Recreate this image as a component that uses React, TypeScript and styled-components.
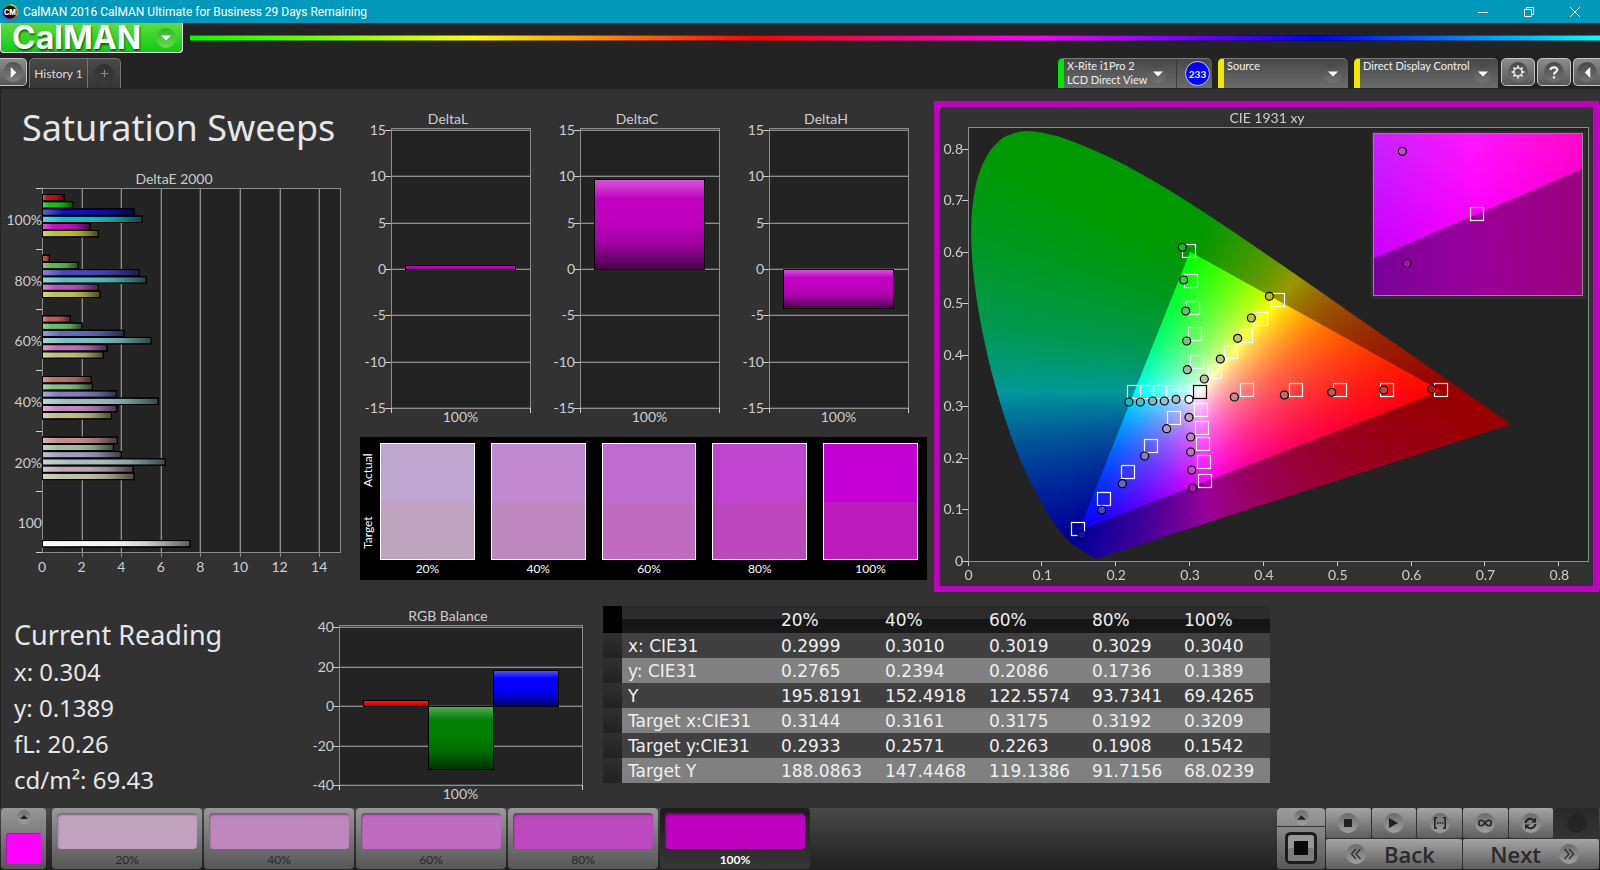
import React, { useEffect, useRef } from "react";
import styled, { createGlobalStyle } from "styled-components";

/* ---------- data ---------- */

const LEVELS = ["20%", "40%", "60%", "80%", "100%"];

const SWATCHES = [
  { level: "20%", actual: "#bfa6d0", target: "#bfa3bf" },
  { level: "40%", actual: "#c088d1", target: "#bd87bf" },
  { level: "60%", actual: "#bf6cd0", target: "#bf6bbf" },
  { level: "80%", actual: "#c145d0", target: "#bd48be" },
  { level: "100%", actual: "#c500d4", target: "#be1bbf" },
];

const TRAY = [
  { level: "20%", color: "#c0a2c0" },
  { level: "40%", color: "#bf86c0" },
  { level: "60%", color: "#bf6bc0" },
  { level: "80%", color: "#bd49be" },
  { level: "100%", color: "#c000c0" },
];

const SWEEP_COLORS: Record<string, string[]> = {
  "100%": ["#c01010", "#10c010", "#1010c0", "#10c0c0", "#c010c0", "#c0c010"],
  "80%": ["#c04444", "#4cbf4c", "#4848c0", "#58c0c0", "#c050c0", "#c0c050"],
  "60%": ["#c05858", "#66bf66", "#6666c0", "#7cbfbf", "#c070c0", "#c0c070"],
  "40%": ["#c06c6c", "#80bf80", "#8080c0", "#98c0c0", "#c088c0", "#c0c088"],
  "20%": ["#c08c8c", "#a0bfa0", "#a0a0c0", "#a8c0c0", "#c0a4c0", "#c0c0a4"],
};

const DELTA_E = [
  { level: "100%", values: [1.14, 1.6, 4.68, 5.09, 2.45, 2.87] },
  { level: "80%", values: [0.4, 1.86, 4.94, 5.29, 2.87, 2.96] },
  { level: "60%", values: [1.46, 2.05, 4.17, 5.54, 3.31, 3.12] },
  { level: "40%", values: [2.52, 2.57, 3.78, 5.89, 3.81, 3.53] },
  { level: "20%", values: [3.83, 3.63, 4.03, 6.25, 4.63, 4.68] },
];

const READINGS = ["x: 0.304", "y: 0.1389", "fL: 20.26", "cd/m²: 69.43"];

const TABLE = [
  ["x: CIE31", "0.2999", "0.3010", "0.3019", "0.3029", "0.3040"],
  ["y: CIE31", "0.2765", "0.2394", "0.2086", "0.1736", "0.1389"],
  ["Y", "195.8191", "152.4918", "122.5574", "93.7341", "69.4265"],
  ["Target x:CIE31", "0.3144", "0.3161", "0.3175", "0.3192", "0.3209"],
  ["Target y:CIE31", "0.2933", "0.2571", "0.2263", "0.1908", "0.1542"],
  ["Target Y", "188.0863", "147.4468", "119.1386", "91.7156", "68.0239"],
];

type Point = [number, number];

const LOCUS: Point[] = [
  [0.1741, 0.005], [0.1714, 0.0051], [0.1644, 0.0109], [0.1566, 0.0177], [0.144, 0.0297],
  [0.1355, 0.0399], [0.1241, 0.0578], [0.1096, 0.0868], [0.0913, 0.1327], [0.0687, 0.2007],
  [0.0454, 0.295], [0.0235, 0.4127], [0.0082, 0.5384], [0.0039, 0.6548], [0.0139, 0.7502],
  [0.0389, 0.812], [0.0743, 0.8338], [0.1142, 0.8262], [0.1547, 0.8059], [0.1929, 0.7816],
  [0.2296, 0.7543], [0.2658, 0.7243], [0.3016, 0.6923], [0.3373, 0.6589], [0.3731, 0.6245],
  [0.4087, 0.5896], [0.4441, 0.5547], [0.4788, 0.5202], [0.5125, 0.4866], [0.5752, 0.4242],
  [0.627, 0.3725], [0.6658, 0.334], [0.6915, 0.3083], [0.719, 0.2809], [0.7347, 0.2653],
];

const TARGETS: Point[] = [
  [0.2986, 0.6014], [0.3008, 0.5432], [0.3035, 0.4901], [0.3067, 0.4397], [0.3094, 0.3854],
  [0.4191, 0.5063], [0.3961, 0.4688], [0.3762, 0.4371], [0.3554, 0.4048], [0.3338, 0.3666],
  [0.64, 0.3317], [0.5667, 0.3317], [0.503, 0.3317], [0.4435, 0.3317], [0.3768, 0.3317],
  [0.3209, 0.1552], [0.3192, 0.1926], [0.3175, 0.2276], [0.3167, 0.2571], [0.3151, 0.2938],
  [0.1483, 0.0621], [0.1835, 0.1203], [0.216, 0.172], [0.2471, 0.2224], [0.2787, 0.2768],
  [0.2241, 0.3285], [0.2422, 0.3285], [0.2598, 0.3285], [0.2774, 0.3285], [0.2945, 0.3285],
];

/* Each sweep runs from full saturation down to 20%. */
const MEASURED: Record<string, Point[]> = {
  red: [[0.6272, 0.3337], [0.5622, 0.3317], [0.4918, 0.3272], [0.4277, 0.322], [0.36, 0.3181]],
  green: [[0.2895, 0.6085], [0.2913, 0.5451], [0.2941, 0.485], [0.2954, 0.4268], [0.2963, 0.3712]],
  blue: [[0.1537, 0.0504], [0.1803, 0.0989], [0.2083, 0.15], [0.2385, 0.2037], [0.2683, 0.2567]],
  cyan: [[0.2173, 0.3084], [0.2327, 0.3084], [0.2494, 0.3104], [0.2652, 0.3104], [0.281, 0.3136]],
  magenta: [[0.3035, 0.1416], [0.3022, 0.1765], [0.3008, 0.2114], [0.3008, 0.2405], [0.2986, 0.2787]],
  yellow: [[0.4074, 0.5134], [0.383, 0.4714], [0.3645, 0.4319], [0.341, 0.3918], [0.3193, 0.3531]],
};
const SWEEP_ORDER = ["red", "green", "blue", "cyan", "magenta", "yellow"];
const SATURATIONS = ["100%", "80%", "60%", "40%", "20%"];

/* ---------- page shell ---------- */

const GlobalStyle = createGlobalStyle`
  *, *::before, *::after { box-sizing: border-box; }
  body {
    margin: 0;
    background: #232323;
    color: #e6e6e6;
    font-family: Lato, "Liberation Sans", sans-serif;
    font-size: 14px;
  }
  button { font: inherit; color: inherit; padding: 0; border: 0; background: none; cursor: pointer; }
  h1, h2, p { margin: 0; font-weight: 400; }
  svg, canvas { display: block; }
`;

const Page = styled.div`
  min-height: 100vh;
  min-width: 1200px;
  display: flex;
  flex-direction: column;
`;

const TitleBar = styled.header`
  display: flex;
  align-items: center;
  height: 23px;
  padding: 0 2px;
  background: #0099bc;
  color: #fff;
  font-family: Roboto, "Open Sans", sans-serif;
  font-size: 12px;
`;

const TitleText = styled.span`
  flex: 1;
  margin-left: 5px;
`;

const WindowButton = styled.button`
  width: 46px;
  height: 20px;
  display: grid;
  place-items: center;
`;

const LogoRow = styled.div`
  display: flex;
  align-items: flex-start;
  gap: 7px;
  height: 35px;
`;

const LogoButton = styled.button`
  display: flex;
  align-items: center;
  justify-content: space-between;
  width: 183px;
  height: 30px;
  padding: 0 6px 0 11px;
  border: 1px solid #f0f0f0;
  border-top: 0;
  border-radius: 0 0 4px 4px;
  background: linear-gradient(#62dc3c, #0ccc14);
  font-family: Inter, "DejaVu Sans", sans-serif;
  font-size: 32px;
  line-height: 28px;
  font-weight: 700;
  color: #fff;
  text-shadow: 1px 2px 2px rgba(0, 60, 0, 0.7);
`;

const Rainbow = styled.div`
  flex: 1;
  height: 6px;
  margin-top: 12px;
  background: linear-gradient(90deg, #0f0, #ff0, #f00, #f0f, #00f, #0ff);
  border: solid rgba(0, 0, 0, 0.45);
  border-width: 1px 0;
`;

const Knob = styled.span<{ $size: number; $tone?: string }>`
  display: grid;
  place-items: center;
  flex: none;
  width: ${(p) => p.$size}px;
  height: ${(p) => p.$size}px;
  border-radius: 50%;
  background: ${(p) => p.$tone ?? "linear-gradient(#484848, #747474)"};
`;

const TabRow = styled.nav`
  display: flex;
  align-items: flex-start;
  height: 30px;
`;

const SquareButton = styled.button<{ $edge?: "left" | "right" }>`
  display: grid;
  place-items: center;
  width: ${(p) => (p.$edge ? 27 : 34)}px;
  height: 28px;
  border: 1px solid #c4c4c4;
  border-radius: 5px;
  background: linear-gradient(#8c8c8c, #585858);
  ${(p) => p.$edge === "left" && "border-left: 0; border-top-left-radius: 0; border-bottom-left-radius: 0;"}
  ${(p) => p.$edge === "right" && "border-right: 0; border-top-right-radius: 0; border-bottom-right-radius: 0;"}
`;

const TabGroup = styled.div`
  display: flex;
  flex: none;
  height: 30px;
  margin-left: 2px;
  border: 1px solid #747474;
  border-bottom: 0;
  border-radius: 5px 5px 0 0;
  background: linear-gradient(#4a4a4a, #343434);
`;

const Tab = styled.button`
  width: 58px;
  white-space: nowrap;
  font-size: 12px;
  color: #dcdcdc;
  border-right: 1px solid #747474;
`;

const AddTab = styled.button`
  display: grid;
  place-items: center;
  width: 32px;
`;

const DeviceBar = styled.div`
  display: flex;
  gap: 6px;
  margin-left: auto;
`;

const Device = styled.div<{ $accent: string; $width: number }>`
  display: flex;
  width: ${(p) => p.$width}px;
  height: 30px;
  border-top: 1px solid #7a7a7a;
  border-left: 6px solid ${(p) => p.$accent};
  border-radius: 5px 5px 0 0;
  background: linear-gradient(#484848, #6c6c6c);
`;

const DeviceButton = styled.button`
  flex: 1;
  display: flex;
  align-items: center;
  justify-content: space-between;
  padding: 0 6px 0 3px;
  text-align: left;
  white-space: nowrap;
  font-size: 11px;
  line-height: 14px;
  color: #f0f0f0;
`;

const DeviceName = styled.span`
  align-self: flex-start;
`;

const Counter = styled.span`
  display: flex;
  align-items: center;
  justify-content: flex-end;
  width: 36px;
  margin-left: 3px;
  padding-right: 2px;
  border-left: 1px solid #3c3c3c;
`;

const CounterDisc = styled.span`
  display: grid;
  place-items: center;
  width: 25px;
  height: 25px;
  border: 1px solid #c8c8ff;
  border-radius: 50%;
  background: #0000ff;
  color: #fff;
  font-size: 10px;
  font-weight: 700;
`;

const ToolButtons = styled.div`
  display: flex;
  gap: 2px;
  margin-left: 3px;
`;

const Main = styled.main`
  flex: 1;
  margin-top: 1px;
  border-left: 1px solid #232323;
  background: #323232;
`;

const TopArea = styled.section`
  display: grid;
  grid-template-columns: 357fr 569fr 673fr;
  align-items: start;
`;

const SweepColumn = styled.div`
  padding-top: 17px;
`;

const PageTitle = styled.h1`
  padding-left: 21px;
  margin-bottom: 15px;
  font-family: "Noto Sans", "Open Sans", sans-serif;
  font-size: 36px;
  line-height: 44px;
  white-space: nowrap;
`;

const DeltaColumn = styled.div`
  padding-top: 20px;
`;

const DeltaRow = styled.div`
  display: grid;
  grid-template-columns: repeat(3, 1fr);
  padding-right: 2px;
`;

const ChartSvg = styled.svg`
  width: 100%;
  height: auto;
  font-family: Lato, "Liberation Sans", sans-serif;
  font-size: 14px;
  fill: #cdcdcd;
`;

const ComparePanel = styled.div`
  display: flex;
  gap: 4px;
  height: 143px;
  margin: 8px 0 0 2px;
  padding: 6px 9px 0 0;
  background: #000;
  color: #fff;
  font-size: 12px;
`;

const SideLabels = styled.div`
  display: grid;
  grid-template-rows: 54px 72px;
  width: 16px;
`;

const SideLabel = styled.span`
  writing-mode: vertical-rl;
  transform: rotate(180deg);
  text-align: center;
  line-height: 16px;
`;

const CompareList = styled.div`
  flex: 1;
  display: grid;
  grid-template-columns: repeat(5, 1fr);
  gap: 16px;
`;

const CompareSwatch = styled.div`
  display: grid;
  height: 117px;
  grid-template-rows: 1fr 1fr;
  border: 1px solid #fff;
`;

const SwatchHalf = styled.span<{ $color: string }>`
  background: ${(p) => p.$color};
`;

const CompareLabel = styled.div`
  text-align: center;
  line-height: 18px;
`;

const CieColumn = styled.div`
  padding: 12px 1px 0 7px;
`;

const CiePanel = styled.div`
  display: grid;
  border: 6px solid #c000c0;
`;

const CieCanvas = styled.canvas`
  grid-area: 1 / 1;
  width: 100%;
  height: auto;
`;

const CieSvg = styled(ChartSvg)`
  grid-area: 1 / 1;
`;

const BottomArea = styled.section`
  display: grid;
  grid-template-columns: 299fr 303fr 667fr 330fr;
  align-items: start;
  padding-top: 14px;
`;

const ReadingBlock = styled.div`
  padding: 10px 0 0 13px;
  font-family: "Noto Sans", "Open Sans", sans-serif;
`;

const ReadingTitle = styled.h2`
  font-size: 27px;
  line-height: 38px;
`;

const ReadingLine = styled.p`
  font-size: 24px;
  line-height: 36px;
`;

const DataTable = styled.table`
  width: 100%;
  table-layout: fixed;
  border-collapse: collapse;
  font-family: "DejaVu Sans", Verdana, sans-serif;
  font-size: 17px;
  line-height: 24px;
  color: #efefef;
  text-align: left;
  white-space: nowrap;

  th, td { padding: 1px 0 0 6px; font-weight: 400; }
`;

const HeadRow = styled.tr`
  height: 27px;
  background: linear-gradient(#2c2c2c 0 48%, #141414 48%, #181818);
`;

const BodyRow = styled.tr<{ $light: boolean }>`
  height: 25px;
  background: ${(p) => (p.$light ? "#808080" : "#404040")};
`;

const RowHandle = styled.td<{ $head?: boolean }>`
  background: ${(p) => (p.$head ? "#000" : "linear-gradient(#303030, #222)")};
`;

const Tray = styled.footer`
  display: flex;
  align-items: flex-start;
  height: 62px;
  padding: 0 1px;
  background: linear-gradient(#484848, #202020);
  font-size: 12px;
`;

const CurrentPatch = styled.button`
  display: flex;
  flex-direction: column;
  align-items: center;
  justify-content: space-between;
  width: 45px;
  height: 61px;
  margin-right: 6px;
  padding: 2px 5px 5px;
  border-radius: 4px;
  background: linear-gradient(#989898, #565656);
`;

const CurrentColor = styled.span`
  width: 35px;
  height: 31px;
  border-radius: 3px;
  border: 1px solid #c400c4;
  border-width: 1px 0 0 1px;
  background: #ff00ff;
`;

const PatchList = styled.div`
  display: flex;
  gap: 2px;
`;

const PatchButton = styled.button<{ $active: boolean }>`
  display: flex;
  flex-direction: column;
  gap: 3px;
  width: 150px;
  height: 61px;
  padding: 5px 5px 0;
  border-radius: 4px;
  background: ${(p) => (p.$active ? "linear-gradient(#1c1c1c, #363636)" : "linear-gradient(#989898, #565656)")};
  color: ${(p) => (p.$active ? "#fff" : "#282828")};
  font-weight: ${(p) => (p.$active ? 700 : 400)};
`;

const PatchColor = styled.span<{ $color: string }>`
  height: 36px;
  border-radius: 4px;
  background: ${(p) => p.$color};
  box-shadow: inset 1px 2px 2px rgba(0, 0, 0, 0.35);
`;

const PatchLabel = styled.span`
  text-align: center;
  line-height: 16px;
`;

const Transport = styled.div`
  display: grid;
  grid-template-columns: 48px 273px;
  gap: 1px;
  margin-left: auto;
  color: #2a2a2a;
`;

const SourceStack = styled.div`
  display: grid;
  grid-template-rows: 18px 42px;
  gap: 1px;
  background: #333;
`;

const StackButton = styled.button<{ $top?: boolean }>`
  display: grid;
  place-items: center;
  border-radius: ${(p) => (p.$top ? "4px 4px 0 0" : "0 0 4px 4px")};
  background: ${(p) => (p.$top ? "linear-gradient(#9c9c9c, #8a8a8a)" : "linear-gradient(#888, #585858)")};
`;

const TransportPad = styled.div`
  display: grid;
  grid-template-columns: repeat(6, 1fr);
  grid-template-rows: 30px 30px;
  gap: 1px;
  background: #333;
`;

const PadButton = styled.button<{ $off?: boolean }>`
  display: grid;
  place-items: center;
  border-radius: 2px;
  background: ${(p) => (p.$off ? "linear-gradient(#2a2a2a, #343434)" : "linear-gradient(#a4a4a4, #5e5e5e)")};
`;

const StepButton = styled.button<{ $align: "flex-start" | "flex-end" }>`
  grid-column: span 3;
  display: flex;
  align-items: center;
  justify-content: ${(p) => p.$align};
  gap: 18px;
  padding: 0 20px;
  border-radius: 2px;
  background: linear-gradient(#a4a4a4, #5e5e5e);
  font-family: "Open Sans", "Noto Sans", sans-serif;
  font-size: 22px;
  font-weight: 600;
  line-height: 30px;
`;

/* ---------- small drawings ---------- */

const padTone = "linear-gradient(#6c6c6c, #a0a0a0)";

const Triangle = ({ dir, size = 10, color = "#fff" }: { dir: "down" | "up" | "right" | "left"; size?: number; color?: string }) => {
  const d = {
    down: "M0 2.5H10L5 7.5Z",
    up: "M0 7.5H10L5 2.5Z",
    right: "M2.5 0V10L7.5 5Z",
    left: "M7.5 0V10L2.5 5Z",
  }[dir];
  return (
    <svg width={size} height={size} viewBox="0 0 10 10" aria-hidden="true">
      <path d={d} fill={color} />
    </svg>
  );
};

const AppIcon = () => (
  <svg width="16" height="16" viewBox="0 0 16 16" aria-hidden="true">
    <path d="M8 8L8 0A8 8 0 0 1 15 4Z" fill="#b3e000" />
    <path d="M8 8L15 4A8 8 0 0 1 15 12Z" fill="#e8a000" />
    <path d="M8 8L15 12A8 8 0 0 1 8 16Z" fill="#e0402a" />
    <path d="M8 8L8 16A8 8 0 0 1 1 12Z" fill="#9a28e0" />
    <path d="M8 8L1 12A8 8 0 0 1 1 4Z" fill="#2050f0" />
    <path d="M8 8L1 4A8 8 0 0 1 8 0Z" fill="#10c040" />
    <circle cx="8" cy="8" r="6.6" fill="#0a0a0a" />
    <text x="8" y="10.6" textAnchor="middle" fontFamily="Inter, sans-serif" fontWeight="800" fontSize="7" fill="#fff">CM</text>
  </svg>
);

const Gear = () => (
  <svg width="14" height="14" viewBox="0 0 14 14" fill="none" stroke="#dedede" aria-hidden="true">
    <circle cx="7" cy="7" r="4" strokeWidth="1.6" />
    {[0, 45, 90, 135, 180, 225, 270, 315].map((a) => (
      <path key={a} d="M7 3V0.6" strokeWidth="2" transform={`rotate(${a} 7 7)`} />
    ))}
  </svg>
);

const Chevrons = ({ flip }: { flip?: boolean }) => (
  <svg width="12" height="12" viewBox="0 0 12 12" fill="none" stroke="#303030" strokeWidth="1.4" aria-hidden="true">
    <path d={flip ? "M1.5 1L6 6L1.5 11M6 1L10.5 6L6 11" : "M6 1L1.5 6L6 11M10.5 1L6 6L10.5 11"} />
  </svg>
);

/* ---------- charts ---------- */

const FRAME = "#8c8c8c";
const PLOT_BG = "#232323";

/* Light-to-dark sheen laid over every bar. */
const Gloss = ({ id, horizontal }: { id: string; horizontal?: boolean }) => (
  <linearGradient id={id} x1="0" y1="0" x2={horizontal ? 1 : 0} y2={horizontal ? 0 : 1}>
    <stop offset="0" stopColor="#fff" stopOpacity="0.34" />
    <stop offset="0.22" stopColor="#fff" stopOpacity="0" />
    <stop offset="0.5" stopColor="#000" stopOpacity="0.02" />
    <stop offset="0.7" stopColor="#000" stopOpacity="0.15" />
    <stop offset="1" stopColor="#000" stopOpacity="0.62" />
  </linearGradient>
);

const DeltaEChart = () => {
  const left = 41, top = 23, width = 298, height = 364;
  const unit = 19.8;
  const group = height / 6;
  const pitch = 7.2;
  return (
    <ChartSvg viewBox="0 0 357 415" role="img" aria-label="DeltaE 2000">
      <defs><Gloss id="gloss-e" horizontal /></defs>
      <text x="173" y="19" textAnchor="middle">DeltaE 2000</text>
      <rect x={left} y={top} width={width} height={height} fill={PLOT_BG} />
      {[2, 4, 6, 8, 10, 12, 14].map((v) => (
        <g key={v}>
          <rect x={Math.round(left + v * unit) - 1} y={top} width="1" height={height} fill="#484848" />
          <rect x={Math.round(left + v * unit)} y={top} width="1" height={height + 5} fill={FRAME} />
        </g>
      ))}
      {[0, 2, 4, 6, 8, 10, 12, 14].map((v) => (
        <text key={v} x={left + v * unit} y={407} textAnchor="middle">{v}</text>
      ))}
      {[0, 1, 2, 3, 4, 5, 6].map((i) => (
        <rect key={i} x={left - 6} y={Math.round(top + i * group)} width="6" height="1" fill="#cdcdcd" />
      ))}
      <rect x={left + 0.5} y={top + 0.5} width={width} height={height} fill="none" stroke={FRAME} />
      {DELTA_E.map((g, gi) =>
        g.values.map((v, i) => {
          const y = top + gi * group + 6.5 + i * pitch;
          return (
            <g key={g.level + i} stroke="#000">
              <rect x={left + 0.5} y={y} width={v * unit - 1} height="6.4" fill={SWEEP_COLORS[g.level][i]} />
              <rect x={left + 0.5} y={y} width={v * unit - 1} height="6.4" fill="url(#gloss-e)" />
            </g>
          );
        })
      )}
      <g stroke="#000">
        <rect x={left + 0.5} y={top + 5 * group + 6 + 6 * pitch} width={7.5 * unit - 1} height="6.4" fill="#f6f6f6" />
        <rect x={left + 0.5} y={top + 5 * group + 6 + 6 * pitch} width={7.5 * unit - 1} height="6.4" fill="url(#gloss-e)" />
      </g>
      {[...DELTA_E.map((g) => g.level), "100"].map((label, i) => (
        <text key={label} x="41" y={top + i * group + 37} textAnchor="end">{label}</text>
      ))}
    </ChartSvg>
  );
};

type VBar = { from: number; to: number; value: number; color: string };

const VerticalChart = (p: {
  id: string; title: string; titleX: number; viewBox: string; left: number; top: number; width: number;
  max: number; step: number; unit: number; pad: number; bars: VBar[];
}) => {
  const ticks: number[] = [];
  for (let v = p.max; v >= -p.max; v -= p.step) ticks.push(v);
  const yOf = (v: number) => Math.round(p.top + p.pad + (p.max - v) * p.unit);
  const bottom = yOf(-p.max);
  return (
    <ChartSvg viewBox={p.viewBox} role="img" aria-label={p.title}>
      <defs><Gloss id={p.id} /></defs>
      <text x={p.titleX} y={p.top - 4} textAnchor="middle">{p.title}</text>
      <rect x={p.left} y={p.top} width={p.width} height={bottom - p.top} fill={PLOT_BG} />
      {ticks.map((v) => (
        <g key={v}>
          <rect x={p.left} y={yOf(v) - 1} width={p.width} height="1" fill="#484848" />
          <rect x={p.left} y={yOf(v)} width={p.width} height="1" fill={FRAME} />
          <rect x={p.left - 6} y={yOf(v)} width="6" height="1" fill="#cdcdcd" />
          <text x={p.left - 5} y={yOf(v) + 5} textAnchor="end">{v}</text>
        </g>
      ))}
      <rect x={p.left + 0.5} y={p.top + 0.5} width={p.width} height={bottom - p.top} fill="none" stroke={FRAME} />
      <rect x={p.left} y={bottom} width="1" height="5" fill="#cdcdcd" />
      <rect x={p.left + p.width} y={bottom} width="1" height="5" fill="#cdcdcd" />
      {p.bars.map((b) => {
        const y = Math.min(yOf(0), yOf(b.value)) + 0.5;
        const h = Math.abs(yOf(b.value) - yOf(0));
        return (
          <g key={b.from} stroke="#000">
            <rect x={b.from + 0.5} y={y} width={b.to - b.from} height={h} fill={b.color} />
            <rect x={b.from + 0.5} y={y} width={b.to - b.from} height={h} fill={`url(#${p.id})`} />
          </g>
        );
      })}
      <text x={p.left + p.width / 2} y={bottom + 14} textAnchor="middle">100%</text>
    </ChartSvg>
  );
};

const DeltaChart = ({ title, value }: { title: string; value: number }) => (
  <VerticalChart
    id={`gloss-${title}`} title={title} titleX={90} viewBox="0 0 189 320"
    left={33} top={19} width={139} max={15} step={5} unit={9.27} pad={2}
    bars={[{ from: 47, to: 157, value, color: "#c000c0" }]}
  />
);

/* CIE diagram geometry, in the units of its 653x479 drawing. */
const CIE_W = 653, CIE_H = 479;
const PLOT = { x: 28, y: 20, w: 621, h: 434 };
const px = (x: number) => 28.5 + x * 738.5;
const py = (y: number) => 454 - y * 515.5;
const INSET = { x: 433, y: 26, w: 210, h: 163 };
const ix = (x: number) => 537 + (x - 0.3209) * 4150;
const iy = (y: number) => 107 - (y - 0.1542) * 3230;

/* Linear Rec.709 colour of a chromaticity; out-of-gamut colours are clipped and dimmed. */
function chromaColor(x: number, y: number): [number, number, number] {
  const z = 1 - x - y;
  let r = 3.2405 * x - 1.5371 * y - 0.4985 * z;
  let g = -0.9693 * x + 1.876 * y + 0.0416 * z;
  let b = 0.0556 * x - 0.204 * y + 1.0572 * z;
  const outside = r < 0 || g < 0 || b < 0;
  r = Math.max(0, r);
  g = Math.max(0, g);
  b = Math.max(0, b);
  const k = (outside ? 153 : 255) / Math.max(r, g, b);
  return [r * k, g * k, b * k];
}

function chromaTile(w: number, h: number, toX: (u: number) => number, toY: (v: number) => number) {
  const scale = 2;
  const tile = document.createElement("canvas");
  tile.width = w * scale;
  tile.height = h * scale;
  const c = tile.getContext("2d")!;
  const img = c.createImageData(tile.width, tile.height);
  for (let j = 0; j < tile.height; j++) {
    for (let i = 0; i < tile.width; i++) {
      const [r, g, b] = chromaColor(toX((i + 0.5) / scale), toY((j + 0.5) / scale));
      const o = (j * tile.width + i) * 4;
      img.data[o] = r;
      img.data[o + 1] = g;
      img.data[o + 2] = b;
      img.data[o + 3] = 255;
    }
  }
  c.putImageData(img, 0, 0);
  return tile;
}

function drawDiagram(canvas: HTMLCanvasElement) {
  const c = canvas.getContext("2d")!;
  c.clearRect(0, 0, CIE_W, CIE_H);
  c.fillStyle = PLOT_BG;
  c.fillRect(PLOT.x, PLOT.y, PLOT.w, PLOT.h);

  const tile = chromaTile(PLOT.w, PLOT.h, (u) => (u + PLOT.x - 28.5) / 738.5, (v) => (454 - v - PLOT.y) / 515.5);
  c.save();
  c.beginPath();
  const pts = LOCUS.map(([x, y]) => [px(x), py(y)]);
  c.moveTo(pts[0][0], pts[0][1]);
  for (let i = 0; i < pts.length - 1; i++) {
    const a = pts[Math.max(0, i - 1)], b = pts[i], d = pts[i + 1], e = pts[Math.min(pts.length - 1, i + 2)];
    c.bezierCurveTo(
      b[0] + (d[0] - a[0]) / 6, b[1] + (d[1] - a[1]) / 6,
      d[0] - (e[0] - b[0]) / 6, d[1] - (e[1] - b[1]) / 6,
      d[0], d[1]
    );
  }
  c.closePath();
  c.clip();
  c.drawImage(tile, PLOT.x, PLOT.y, PLOT.w, PLOT.h);
  c.restore();

  c.fillStyle = "#2e2e2e";
  c.fillRect(INSET.x - 2, INSET.y - 2, INSET.w + 5, INSET.h + 5);
  const inset = chromaTile(
    INSET.w, INSET.h,
    (u) => 0.3209 + (u + INSET.x - 537) / 4150,
    (v) => 0.1542 - (v + INSET.y - 107) / 3230
  );
  c.drawImage(inset, INSET.x, INSET.y, INSET.w, INSET.h);
}

const Target = ({ x, y, color = "#fff" }: { x: number; y: number; color?: string }) => (
  <rect x={Math.round(x) - 6.5} y={Math.round(y) - 6.5} width="13" height="13" fill="none" stroke={color} strokeWidth="1.2" />
);

const Dot = ({ x, y, color }: { x: number; y: number; color: string }) => (
  <circle cx={x} cy={y} r="4" fill={color} stroke="#000" strokeWidth="1.2" />
);

const CieChart = () => {
  const ref = useRef<HTMLCanvasElement>(null);
  useEffect(() => {
    if (ref.current) drawDiagram(ref.current);
  }, []);
  return (
    <CiePanel>
      <CieCanvas ref={ref} width={CIE_W} height={CIE_H} />
      <CieSvg viewBox={`0 0 ${CIE_W} ${CIE_H}`} role="img" aria-label="CIE 1931 xy">
        <text x="327" y="16" textAnchor="middle">CIE 1931 xy</text>
        <rect x={PLOT.x + 0.5} y={PLOT.y + 0.5} width={PLOT.w - 1} height={PLOT.h} fill="none" stroke={FRAME} />
        {[0, 1, 2, 3, 4, 5, 6, 7, 8].map((n) => (
          <g key={n}>
            <rect x={Math.round(px(n / 10)) - 1} y="455" width="1" height="4" fill="#cdcdcd" />
            <text x={px(n / 10)} y="473" textAnchor="middle">{n / 10}</text>
            <rect x="22" y={Math.round(py(n / 10))} width="6" height="1" fill="#cdcdcd" />
            <text x="23" y={py(n / 10) + 5} textAnchor="end">{n / 10}</text>
          </g>
        ))}
        {TARGETS.map(([x, y]) => <Target key={`${x}-${y}`} x={px(x)} y={py(y)} />)}
        <Target x={px(0.313)} y={py(0.3285)} color="#000" />
        {SWEEP_ORDER.map((name, s) =>
          MEASURED[name].map(([x, y], i) => (
            <Dot key={name + i} x={px(x)} y={py(y)} color={SWEEP_COLORS[SATURATIONS[i]][s]} />
          ))
        )}
        <Dot x={px(0.2986)} y={py(0.3136)} color="#fff" />
        <rect x={INSET.x + 0.5} y={INSET.y + 0.5} width={INSET.w - 1} height={INSET.h - 1} fill="none" stroke={FRAME} />
        <Target x={ix(0.3209)} y={iy(0.1542)} />
        <Dot x={ix(0.304)} y={iy(0.1389)} color="#c000c0" />
        <Dot x={ix(0.3029)} y={iy(0.1736)} color="#c050c0" />
      </CieSvg>
    </CiePanel>
  );
};

/* ---------- page ---------- */

export default function App() {
  return (
    <Page>
      <GlobalStyle />
      <TitleBar>
        <AppIcon />
        <TitleText>CalMAN 2016 CalMAN Ultimate for Business 29 Days Remaining</TitleText>
        <WindowButton aria-label="Minimize">
          <svg width="10" height="10" viewBox="0 0 10 10"><path d="M0 5.5H10" stroke="#fff" /></svg>
        </WindowButton>
        <WindowButton aria-label="Restore">
          <svg width="10" height="10" viewBox="0 0 10 10" fill="none" stroke="#fff">
            <path d="M0.5 2.5H7.5V9.5H0.5ZM2.5 2.5V0.5H9.5V7.5H7.5" />
          </svg>
        </WindowButton>
        <WindowButton aria-label="Close">
          <svg width="10" height="10" viewBox="0 0 10 10"><path d="M0 0L10 10M10 0L0 10" stroke="#fff" /></svg>
        </WindowButton>
      </TitleBar>

      <LogoRow>
        <LogoButton aria-haspopup="menu">
          CalMAN
          <Knob $size={20} $tone="linear-gradient(#2cb428, #6cdc4c)"><Triangle dir="down" /></Knob>
        </LogoButton>
        <Rainbow />
      </LogoRow>

      <TabRow>
        <SquareButton $edge="left" aria-label="Show panel">
          <Knob $size={20} $tone="linear-gradient(#505050, #808080)"><Triangle dir="right" size={11} /></Knob>
        </SquareButton>
        <TabGroup>
          <Tab>History 1</Tab>
          <AddTab aria-label="Add tab">
            <Knob $size={20} $tone="linear-gradient(#303030, #3c3c3c)">
              <svg width="7" height="7" viewBox="0 0 7 7"><path d="M0 3.5H7M3.5 0V7" stroke="#8c8c8c" /></svg>
            </Knob>
          </AddTab>
        </TabGroup>
        <DeviceBar>
          <Device $accent="#00e800" $width={154}>
            <DeviceButton aria-haspopup="menu">
              <DeviceName>X-Rite i1Pro 2<br />LCD Direct View</DeviceName>
              <Knob $size={19}><Triangle dir="down" /></Knob>
            </DeviceButton>
            <Counter><CounterDisc>233</CounterDisc></Counter>
          </Device>
          <Device $accent="#ece800" $width={130}>
            <DeviceButton aria-haspopup="menu">
              <DeviceName>Source</DeviceName>
              <Knob $size={19}><Triangle dir="down" /></Knob>
            </DeviceButton>
          </Device>
          <Device $accent="#ece800" $width={144}>
            <DeviceButton aria-haspopup="menu">
              <DeviceName>Direct Display Control</DeviceName>
              <Knob $size={19}><Triangle dir="down" /></Knob>
            </DeviceButton>
          </Device>
        </DeviceBar>
        <ToolButtons>
          <SquareButton aria-label="Settings"><Knob $size={20}><Gear /></Knob></SquareButton>
          <SquareButton aria-label="Help">
            <Knob $size={20}>
              <svg width="10" height="13" viewBox="0 0 10 13" fill="none" stroke="#f4f4f4" strokeWidth="2.2">
                <path d="M1.5 4C1.5 0.6 8.5 0.4 8.3 3.8C8.2 6 5 5.8 5 8.6M5 10.2V12.6" />
              </svg>
            </Knob>
          </SquareButton>
          <SquareButton $edge="right" aria-label="Hide panel"><Knob $size={20}><Triangle dir="left" size={11} /></Knob></SquareButton>
        </ToolButtons>
      </TabRow>

      <Main>
        <TopArea>
          <SweepColumn>
            <PageTitle>Saturation Sweeps</PageTitle>
            <DeltaEChart />
          </SweepColumn>
          <DeltaColumn>
            <DeltaRow>
              <DeltaChart title="DeltaL" value={0.45} />
              <DeltaChart title="DeltaC" value={9.75} />
              <DeltaChart title="DeltaH" value={-4.15} />
            </DeltaRow>
            <ComparePanel>
              <SideLabels>
                <SideLabel>Actual</SideLabel>
                <SideLabel>Target</SideLabel>
              </SideLabels>
              <CompareList>
                {SWATCHES.map((s) => (
                  <div key={s.level}>
                    <CompareSwatch>
                      <SwatchHalf $color={s.actual} />
                      <SwatchHalf $color={s.target} />
                    </CompareSwatch>
                    <CompareLabel>{s.level}</CompareLabel>
                  </div>
                ))}
              </CompareList>
            </ComparePanel>
          </DeltaColumn>
          <CieColumn><CieChart /></CieColumn>
        </TopArea>

        <BottomArea>
          <ReadingBlock>
            <ReadingTitle>Current Reading</ReadingTitle>
            {READINGS.map((r) => <ReadingLine key={r}>{r}</ReadingLine>)}
          </ReadingBlock>
          <VerticalChart
            id="gloss-rgb" title="RGB Balance" titleX={148} viewBox="0 0 303 200"
            left={39} top={19} width={243} max={40} step={20} unit={1.975} pad={2}
            bars={[
              { from: 63, to: 128, value: 3, color: "#ff0000" },
              { from: 128, to: 193, value: -31.8, color: "#008000" },
              { from: 193, to: 258, value: 18.2, color: "#0000ff" },
            ]}
          />
          <DataTable>
            <colgroup>
              {[19, 153, 104, 104, 103, 92, 92].map((w, i) => <col key={i} width={`${(w / 667) * 100}%`} />)}
            </colgroup>
            <thead>
              <HeadRow>
                <RowHandle $head />
                <td />
                {LEVELS.map((l) => <th key={l} scope="col">{l}</th>)}
              </HeadRow>
            </thead>
            <tbody>
              {TABLE.map(([label, ...cells], i) => (
                <BodyRow key={label} $light={i % 2 === 1}>
                  <RowHandle />
                  <th scope="row">{label}</th>
                  {cells.map((c, j) => <td key={j}>{c}</td>)}
                </BodyRow>
              ))}
            </tbody>
          </DataTable>
        </BottomArea>
      </Main>

      <Tray>
        <CurrentPatch aria-label="Current patch">
          <Knob $size={14} $tone={padTone}><Triangle dir="up" size={8} color="#222" /></Knob>
          <CurrentColor />
        </CurrentPatch>
        <PatchList>
          {TRAY.map((t) => (
            <PatchButton key={t.level} $active={t.level === "100%"}>
              <PatchColor $color={t.color} />
              <PatchLabel>{t.level}</PatchLabel>
            </PatchButton>
          ))}
        </PatchList>
        <Transport>
          <SourceStack>
            <StackButton $top aria-label="More patches">
              <Knob $size={15} $tone={padTone}><Triangle dir="up" size={9} color="#222" /></Knob>
            </StackButton>
            <StackButton aria-label="Pattern window">
              <svg width="32" height="32" viewBox="0 0 32 32">
                <rect x="1.5" y="1.5" width="29" height="29" rx="4" fill="#989898" stroke="#1c1c1c" strokeWidth="3" />
                <rect x="3" y="16" width="26" height="13" rx="2" fill="#7c7c7c" />
                <rect x="9" y="9" width="14" height="14" fill="#0a0a0a" />
              </svg>
            </StackButton>
          </SourceStack>
          <TransportPad>
            <PadButton aria-label="Stop">
              <Knob $size={20} $tone={padTone}>
                <svg width="8" height="8"><rect width="8" height="8" fill="#222" /></svg>
              </Knob>
            </PadButton>
            <PadButton aria-label="Play">
              <Knob $size={20} $tone={padTone}>
                <svg width="9" height="10" viewBox="0 0 9 10"><path d="M0 0L9 5L0 10Z" fill="#222" /></svg>
              </Knob>
            </PadButton>
            <PadButton aria-label="Read series">
              <Knob $size={20} $tone={padTone}>
                <svg width="12" height="12" viewBox="0 0 12 12" fill="none" stroke="#222" strokeWidth="1.6">
                  <path d="M3 0.8H0.8V11.2H3M9 0.8H11.2V11.2H9" />
                  <path d="M3 6H9.4" strokeDasharray="1.6 0.8" />
                </svg>
              </Knob>
            </PadButton>
            <PadButton aria-label="Read continuously">
              <Knob $size={20} $tone={padTone}>
                <svg width="14" height="8" viewBox="0 0 14 8" fill="none" stroke="#222" strokeWidth="1.6">
                  <path d="M7 4C5.6 2 4.6 1.2 3.4 1.2A2.6 2.8 0 0 0 3.4 6.8C4.6 6.8 5.6 6 7 4C8.4 2 9.4 1.2 10.6 1.2A2.6 2.8 0 0 1 10.6 6.8C9.4 6.8 8.4 6 7 4Z" />
                </svg>
              </Knob>
            </PadButton>
            <PadButton aria-label="Refresh">
              <Knob $size={20} $tone={padTone}>
                <svg width="13" height="13" viewBox="0 0 13 13" fill="none" stroke="#222" strokeWidth="1.9">
                  <path d="M1.6 6A4.8 4.8 0 0 1 9.8 3.2M11.4 7A4.8 4.8 0 0 1 3.2 9.8" />
                  <path d="M12 0.6V5.4H7.2ZM1 12.4V7.6H5.8Z" fill="#222" stroke="none" />
                </svg>
              </Knob>
            </PadButton>
            <PadButton $off aria-label="Idle"><Knob $size={20} $tone="#262626" /></PadButton>
            <StepButton $align="flex-start">
              <Knob $size={20} $tone={padTone}><Chevrons /></Knob>Back
            </StepButton>
            <StepButton $align="flex-end">
              Next<Knob $size={20} $tone={padTone}><Chevrons flip /></Knob>
            </StepButton>
          </TransportPad>
        </Transport>
      </Tray>
    </Page>
  );
}
